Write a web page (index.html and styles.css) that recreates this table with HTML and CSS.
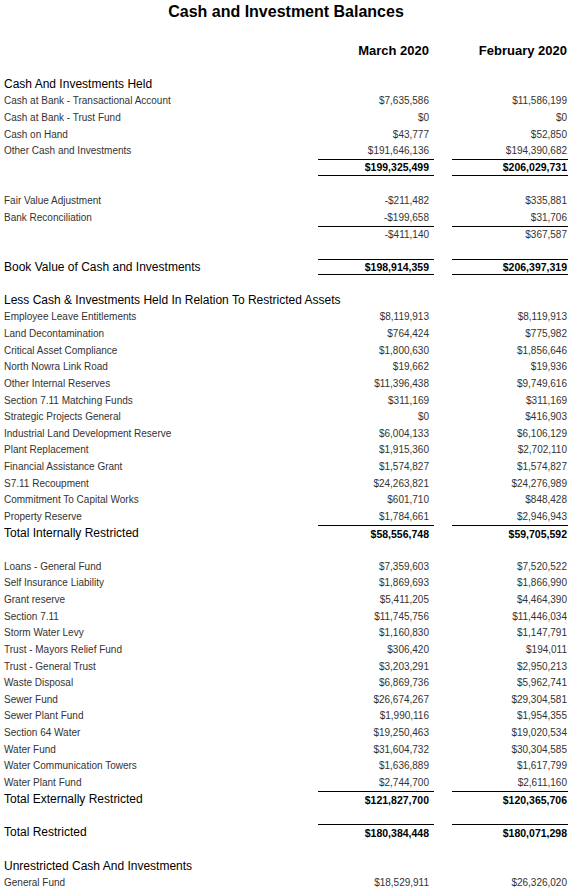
FILE: index.html
```html
<!DOCTYPE html>
<html>
<head>
<meta charset="utf-8">
<link rel="stylesheet" href="styles.css">
</head>
<body>
<div class="page">
  <h1 class="title">Cash and Investment Balances</h1>
  <div class="row"></div>
  <div class="row head"><span></span><span class="v">March 2020</span><span class="v">February 2020</span></div>
  <div class="row"></div>

  <div class="row sec"><span>Cash And Investments Held</span></div>
  <div class="row"><span>Cash at Bank - Transactional Account</span><span class="v">$7,635,586</span><span class="v">$11,586,199</span></div>
  <div class="row"><span>Cash at Bank - Trust Fund</span><span class="v">$0</span><span class="v">$0</span></div>
  <div class="row"><span>Cash on Hand</span><span class="v">$43,777</span><span class="v">$52,850</span></div>
  <div class="row"><span>Other Cash and Investments</span><span class="v">$191,646,136</span><span class="v">$194,390,682</span></div>
  <div class="row tot lt lb"><span></span><span class="v">$199,325,499</span><span class="v">$206,029,731</span></div>
  <div class="row"></div>
  <div class="row"><span>Fair Value Adjustment</span><span class="v">-$211,482</span><span class="v">$335,881</span></div>
  <div class="row"><span>Bank Reconciliation</span><span class="v">-$199,658</span><span class="v">$31,706</span></div>
  <div class="row lt"><span></span><span class="v">-$411,140</span><span class="v">$367,587</span></div>
  <div class="row"></div>
  <div class="row tot lt lb"><span class="big">Book Value of Cash and Investments</span><span class="v">$198,914,359</span><span class="v">$206,397,319</span></div>
  <div class="row"></div>

  <div class="row sec"><span>Less Cash &amp; Investments Held In Relation To Restricted Assets</span></div>
  <div class="row"><span>Employee Leave Entitlements</span><span class="v">$8,119,913</span><span class="v">$8,119,913</span></div>
  <div class="row"><span>Land Decontamination</span><span class="v">$764,424</span><span class="v">$775,982</span></div>
  <div class="row"><span>Critical Asset Compliance</span><span class="v">$1,800,630</span><span class="v">$1,856,646</span></div>
  <div class="row"><span>North Nowra Link Road</span><span class="v">$19,662</span><span class="v">$19,936</span></div>
  <div class="row"><span>Other Internal Reserves</span><span class="v">$11,396,438</span><span class="v">$9,749,616</span></div>
  <div class="row"><span>Section 7.11 Matching Funds</span><span class="v">$311,169</span><span class="v">$311,169</span></div>
  <div class="row"><span>Strategic Projects General</span><span class="v">$0</span><span class="v">$416,903</span></div>
  <div class="row"><span>Industrial Land Development Reserve</span><span class="v">$6,004,133</span><span class="v">$6,106,129</span></div>
  <div class="row"><span>Plant Replacement</span><span class="v">$1,915,360</span><span class="v">$2,702,110</span></div>
  <div class="row"><span>Financial Assistance Grant</span><span class="v">$1,574,827</span><span class="v">$1,574,827</span></div>
  <div class="row"><span>S7.11 Recoupment</span><span class="v">$24,263,821</span><span class="v">$24,276,989</span></div>
  <div class="row"><span>Commitment To Capital Works</span><span class="v">$601,710</span><span class="v">$848,428</span></div>
  <div class="row"><span>Property Reserve</span><span class="v">$1,784,661</span><span class="v">$2,946,943</span></div>
  <div class="row tot lt"><span class="big">Total Internally Restricted</span><span class="v">$58,556,748</span><span class="v">$59,705,592</span></div>
  <div class="row"></div>

  <div class="row"><span>Loans - General Fund</span><span class="v">$7,359,603</span><span class="v">$7,520,522</span></div>
  <div class="row"><span>Self Insurance Liability</span><span class="v">$1,869,693</span><span class="v">$1,866,990</span></div>
  <div class="row"><span>Grant reserve</span><span class="v">$5,411,205</span><span class="v">$4,464,390</span></div>
  <div class="row"><span>Section 7.11</span><span class="v">$11,745,756</span><span class="v">$11,446,034</span></div>
  <div class="row"><span>Storm Water Levy</span><span class="v">$1,160,830</span><span class="v">$1,147,791</span></div>
  <div class="row"><span>Trust - Mayors Relief Fund</span><span class="v">$306,420</span><span class="v">$194,011</span></div>
  <div class="row"><span>Trust - General Trust</span><span class="v">$3,203,291</span><span class="v">$2,950,213</span></div>
  <div class="row"><span>Waste Disposal</span><span class="v">$6,869,736</span><span class="v">$5,962,741</span></div>
  <div class="row"><span>Sewer Fund</span><span class="v">$26,674,267</span><span class="v">$29,304,581</span></div>
  <div class="row"><span>Sewer Plant Fund</span><span class="v">$1,990,116</span><span class="v">$1,954,355</span></div>
  <div class="row"><span>Section 64 Water</span><span class="v">$19,250,463</span><span class="v">$19,020,534</span></div>
  <div class="row"><span>Water Fund</span><span class="v">$31,604,732</span><span class="v">$30,304,585</span></div>
  <div class="row"><span>Water Communication Towers</span><span class="v">$1,636,889</span><span class="v">$1,617,799</span></div>
  <div class="row"><span>Water Plant Fund</span><span class="v">$2,744,700</span><span class="v">$2,611,160</span></div>
  <div class="row tot lt"><span class="big">Total Externally Restricted</span><span class="v">$121,827,700</span><span class="v">$120,365,706</span></div>
  <div class="row"></div>
  <div class="row tot lt"><span class="big">Total Restricted</span><span class="v">$180,384,448</span><span class="v">$180,071,298</span></div>
  <div class="row"></div>

  <div class="row sec"><span>Unrestricted Cash And Investments</span></div>
  <div class="row"><span>General Fund</span><span class="v">$18,529,911</span><span class="v">$26,326,020</span></div>
</div>
</body>
</html>
```

FILE: styles.css
```css
html, body {
  margin: 0;
  padding: 0;
  background: #fff;
}
.page {
  padding: 0 4px;
  font-family: "Liberation Sans", Arial, sans-serif;
  color: #333;
  font-size: 10px;
}
.title {
  margin: 0;
  height: 26px;
  line-height: 23px;
  font-size: 16px;
  font-weight: bold;
  text-align: center;
  color: #000;
}
.row {
  display: grid;
  grid-template-columns: 1fr 116px 116px;
  column-gap: 18px;
  height: 16.625px;
  align-items: center;
  white-space: nowrap;
}
.row > span {
  display: flex;
  align-items: center;
  height: 100%;
  box-sizing: border-box;
}
.row .v {
  justify-content: flex-end;
  padding-right: 5px;
}
.row .v:last-child {
  padding-right: 1px;
}
.head {
  font-size: 13px;
  font-weight: bold;
  color: #000;
}
.sec {
  font-size: 12px;
  color: #000;
}
.tot .v {
  font-size: 10.5px;
  font-weight: bold;
  color: #000;
}
.big {
  font-size: 12px;
  color: #000;
}
.lt .v {
  border-top: 1px solid #000;
}
.lb .v {
  border-bottom: 1px solid #000;
}
```
